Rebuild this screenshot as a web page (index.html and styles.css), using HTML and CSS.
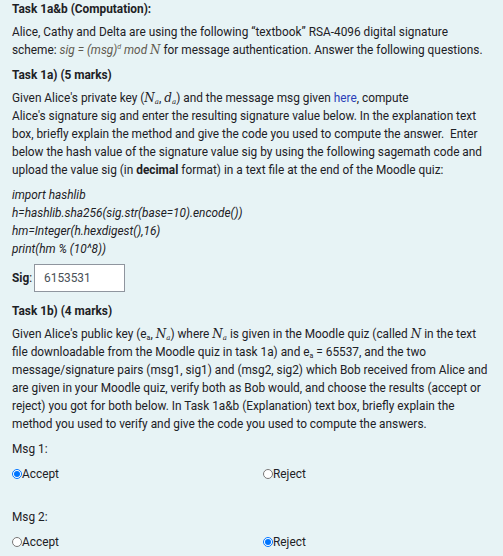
FILE: index.html
```html
<!DOCTYPE html>
<html>
<head>
<meta charset="utf-8">
<link rel="stylesheet" href="styles.css">
</head>
<body>
<div class="page">
  <h4 class="title">Task 1a&amp;b (Computation):</h4>
  <p class="para">Alice, Cathy and Delta are using the following “textbook” RSA-4096 digital signature scheme: <span class="formula">sig = (msg)<sup>d</sup> mod <span class="math">N</span></span> for message authentication. Answer the following questions.</p>
  <h4 class="title">Task 1a) (5 marks)</h4>
  <p class="para">Given Alice's private key (<span class="math">N<sub>a</sub></span>, <span class="math">d<sub>a</sub></span>) and the message msg given <a class="link" href="#">here</a>, compute<br>Alice's signature sig and enter the resulting signature value below. In the explanation text box, briefly explain the method and give the code you used to compute the answer.&nbsp; Enter below the hash value of the signature value sig by using the following sagemath code and upload the value sig (in <b>decimal</b> format) in a text file at the end of the Moodle quiz:</p>
  <div class="code">
    <div>import hashlib</div>
    <div>h=hashlib.sha256(sig.str(base=10).encode())</div>
    <div>hm=Integer(h.hexdigest(),16)</div>
    <div>print(hm % (10^8))</div>
  </div>
  <div class="sig-row">
    <label class="sig-label"><b>Sig</b>:</label>
    <div class="sig-box">6153531</div>
  </div>
  <h4 class="title">Task 1b) (4 marks)</h4>
  <p class="para">Given Alice's public key (e<sub class="sub">a</sub>, <span class="math">N<sub>a</sub></span>) where <span class="math">N<sub>a</sub></span> is given in the Moodle quiz (called <span class="math">N</span> in the text file downloadable from the Moodle quiz in task 1a) and e<sub class="sub">a</sub> = 65537, and the two message/signature pairs (msg1, sig1) and (msg2, sig2) which Bob received from Alice and are given in your Moodle quiz, verify both as Bob would, and choose the results (accept or reject) you got for both below. In Task 1a&amp;b (Explanation) text box, briefly explain the method you used to verify and give the code you used to compute the answers.</p>
  <div class="msg">Msg 1:</div>
  <div class="options">
    <label class="opt"><input type="radio" name="m1" checked>Accept</label>
    <label class="opt"><input type="radio" name="m1">Reject</label>
  </div>
  <div class="msg msg2">Msg 2:</div>
  <div class="options">
    <label class="opt"><input type="radio" name="m2">Accept</label>
    <label class="opt"><input type="radio" name="m2" checked>Reject</label>
  </div>
</div>
</body>
</html>
```
FILE: styles.css
```css
html, body {
  margin: 0;
  padding: 0;
  background: #e7f3f5;
}
.page {
  padding: 0 12px;
  font-family: Roboto, "Liberation Sans", sans-serif;
  font-size: 11.85px;
  line-height: 18px;
  color: #1d2125;
}
.title {
  margin: 0 0 5px 0;
  font-size: 11.85px;
  font-weight: bold;
}
.para {
  margin: 0 0 7px 0;
}
.formula {
  font-style: italic;
  color: #5f5a4f;
}
.formula sup {
  font-size: 7px;
  line-height: 0;
  vertical-align: 5px;
}
.math {
  font-family: "DejaVu Serif", "Liberation Serif", serif;
  font-style: italic;
  font-size: 12px;
  line-height: 0;
}
.math sub, .sub {
  font-size: 7px;
  line-height: 0;
  vertical-align: -2px;
}
.link {
  color: #2b3fb8;
  text-decoration: none;
}
.code {
  font-style: italic;
  margin-bottom: 6px;
}
.sig-row {
  display: flex;
  align-items: center;
  margin-bottom: 10px;
}
.sig-label {
  margin-right: 2px;
}
.sig-box {
  box-sizing: border-box;
  width: 91px;
  height: 28px;
  border: 1px solid #8f959e;
  background: #fff;
  color: #495057;
  padding: 0 9px;
  line-height: 26px;
}
.msg {
  margin-bottom: 7px;
}
.msg2 {
  margin-top: 25px;
}
.options {
  display: grid;
  grid-template-columns: 251px 1fr;
}
.opt {
  display: flex;
  align-items: center;
}
.opt input {
  width: 10px;
  height: 10px;
  margin: 0;
}
```
